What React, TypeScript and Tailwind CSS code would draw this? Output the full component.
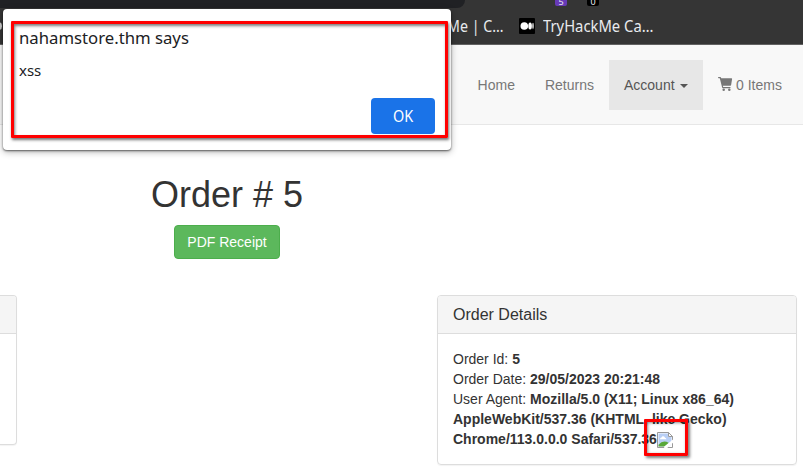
import React from "react";

function CartIcon() {
  return (
    <svg width="15" height="15" viewBox="0 0 15 15" className="mr-[3px] mt-[2px] shrink-0" fill="#777777">
      <path d="M0 .6Q0 0 .6 0H2.2Q2.8 0 3 .6L3.2 1.3H13.5Q14.2 1.3 14.1 2L13.1 8Q13 8.7 12.3 8.7H4.9L5.2 10H12Q12.6 10 12.6 10.6T12 11.3H5Q4.3 11.3 4.1 10.6L1.8 1.2H.6Q0 1.2 0 .6Z" />
      <circle cx="5.7" cy="12.7" r="1.25" />
      <circle cx="11.3" cy="12.7" r="1.25" />
    </svg>
  );
}

function BrokenImage() {
  return (
    <svg width="16" height="16" viewBox="0 0 16 16" className="inline-block align-[-4px]">
      <path d="M.5.5H11.5L15.5 4.5V15.5H.5Z" fill="#fff" stroke="#999999" />
      <path d="M1.5 1.5H11V5H14.5V14.5H1.5Z" fill="#b9cff5" />
      <path d="M3 7Q3 5.5 4.5 5.5Q5 4 6.3 4.2Q7.8 4.3 8 5.8Q9.5 6 9.3 7.3H3Z" fill="#fff" />
      <path d="M1.5 14.5V12.8Q6 7.6 11.5 10.8V14.5Z" fill="#59a839" />
      <path d="M11.5.5V4.5H15.5Z" fill="#fff" stroke="#999999" />
      <path d="M16 7.5L7.2 14.5V16H10.2L16 10.8Z" fill="#fff" />
      <path d="M15 11.7V15H11.2Z" fill="#fff" />
    </svg>
  );
}

function BookmarkBar() {
  return (
    <header className="relative h-[45px] overflow-hidden border-b border-[#626262] bg-[#353535] font-['Noto_Sans',sans-serif] text-[#e8eaed]">
      <div className="flex h-2">
        <div className="h-2 w-[465px] rounded-br-[16px] bg-[#202124]" />
        <div className="ml-[90px] flex h-[6px] w-3 items-end justify-center rounded-b-[2px] bg-[#673ab7] text-[9px] leading-[8px]">5</div>
        <div className="ml-5 flex h-[6px] w-3 items-end justify-center rounded-b-[2px] bg-black text-[9px] leading-[8px]">0</div>
      </div>
      <div className="flex h-9 items-center whitespace-nowrap text-[16px]">
        <span className="ml-[-5px] h-2 w-[7px] rounded-full bg-[#c8c8c8]" />
        <span className="ml-[445px] w-[72px] origin-left scale-x-[0.89]">Me | C…</span>
        <svg width="16" height="16" viewBox="0 0 16 16" className="mr-2">
          <rect width="16" height="16" rx="1" fill="#000" />
          <circle cx="5.3" cy="8" r="3.8" fill="#fff" />
          <ellipse cx="11.1" cy="8" rx="1.8" ry="3.5" fill="#fff" />
          <ellipse cx="14" cy="8" rx=".7" ry="3.2" fill="#fff" />
        </svg>
        <span className="origin-left scale-x-[0.925]">TryHackMe Ca…</span>
      </div>
    </header>
  );
}

function Navigation() {
  return (
    <nav className="flex h-20 items-start justify-end border-b border-[#e7e7e7] bg-[#f8f8f8] pr-[6px] pt-[15px] text-[#777777]">
      <a className="px-[15px] py-[15px]">Home</a>
      <a className="px-[15px] py-[15px]">Returns</a>
      <a className="flex w-[94px] items-center bg-[#e7e7e7] px-[15px] py-[15px] text-[#555555]">
        Account
        <span className="ml-[5px] mt-[2px] border-x-4 border-t-4 border-x-transparent border-t-[#555555]" />
      </a>
      <a className="flex w-[94px] items-start whitespace-nowrap px-[15px] py-[15px]">
        <CartIcon />0 Items
      </a>
    </nav>
  );
}

function Dialog() {
  return (
    <section className="absolute left-[3px] top-[9px] h-[141px] w-[448px] rounded-[4px] bg-white font-['Noto_Sans',sans-serif] text-[#202124] shadow-[0_1px_2px_rgba(0,0,0,0.55),0_2px_7px_rgba(0,0,0,0.3)]">
      <div className="flex h-full flex-col px-4 pt-[17px]">
        <h2 className="origin-left scale-x-[0.983] text-[17px] leading-[23px]">nahamstore.thm says</h2>
        <p className="mt-[11px] text-[15px] leading-5">xss</p>
        <button className="mt-[18px] h-9 w-16 self-end rounded-[4px] bg-[#1a73e8] text-[16px] text-white">
          <span className="inline-block scale-x-[0.9]">OK</span>
        </button>
      </div>
      <div className="absolute left-2 top-3 h-[117px] w-[437px] rounded-[1px] border-[3px] border-[#ff0000] shadow-[1px_2px_3px_rgba(0,0,0,0.55),inset_1px_2px_3px_rgba(0,0,0,0.5)]" />
    </section>
  );
}

export default function App() {
  return (
    <div className="relative h-[467px] w-[803px] overflow-hidden bg-white font-['Liberation_Sans',Arial,sans-serif] text-[14px] leading-5 text-[#333333]">
      <BookmarkBar />
      <Navigation />
      <main>
        <div className="flex h-[170px] w-[454px] flex-col items-center pt-[50px]">
          <h1 className="text-[36px] leading-10">Order # 5</h1>
          <button className="mt-[10px] h-[34px] rounded-[4px] border border-[#4cae4c] bg-[#5cb85c] px-3 text-white">PDF Receipt</button>
        </div>
        <div className="flex items-start justify-between pr-[6px]">
          <section className="h-[150px] w-[17px] rounded-r-[4px] border border-l-0 border-[#dddddd] shadow-[0_1px_1px_rgba(0,0,0,0.05)]">
            <div className="h-[38px] rounded-tr-[3px] border-b border-[#dddddd] bg-[#f5f5f5]" />
          </section>
          <section className="h-[170px] w-[360px] rounded-[4px] border border-[#dddddd] shadow-[0_1px_1px_rgba(0,0,0,0.05)]">
            <h3 className="h-[38px] rounded-t-[3px] border-b border-[#dddddd] bg-[#f5f5f5] px-[15px] pt-[9px] text-[16px]">Order Details</h3>
            <div className="whitespace-nowrap p-[15px]">
              <div>Order Id: <b>5</b></div>
              <div>Order Date: <b>29/05/2023 20:21:48</b></div>
              <div>User Agent: <b>Mozilla/5.0 (X11; Linux x86_64)</b></div>
              <div className="font-bold">AppleWebKit/537.36 (KHTML, like Gecko)</div>
              <div className="h-5 font-bold">Chrome/113.0.0.0 Safari/537.36<BrokenImage /></div>
            </div>
          </section>
        </div>
      </main>
      <div className="absolute left-[644px] top-[419px] h-[37px] w-[44px] rounded-[1px] border-[3px] border-[#ff0000] shadow-[2px_2px_3px_rgba(0,0,0,0.5),inset_1px_1px_3px_rgba(0,0,0,0.45)]" />
      <Dialog />
    </div>
  );
}
